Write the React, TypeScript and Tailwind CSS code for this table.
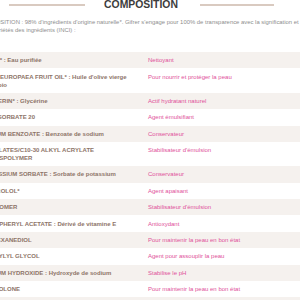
import React from "react";

const rows: [string, string][] = [
  ["AQUA* : Eau purifiée", "Nettoyant"],
  ["OLEA EUROPAEA FRUIT OIL* : Huile d'olive vierge extra bio", "Pour nourrir et protéger la peau"],
  ["GLYCERIN* : Glycérine", "Actif hydratant naturel"],
  ["POLYSORBATE 20", "Agent émulsifiant"],
  ["SODIUM BENZOATE : Benzoate de sodium", "Conservateur"],
  ["ACRYLATES/C10-30 ALKYL ACRYLATE CROSSPOLYMER", "Stabilisateur d'émulsion"],
  ["POTASSIUM SORBATE : Sorbate de potassium", "Conservateur"],
  ["BISABOLOL*", "Agent apaisant"],
  ["CARBOMER", "Stabilisateur d'émulsion"],
  ["TOCOPHERYL ACETATE : Dérivé de vitamine E", "Antioxydant"],
  ["1,2-HEXANEDIOL", "Pour maintenir la peau en bon état"],
  ["CAPRYLYL GLYCOL", "Agent pour assouplir la peau"],
  ["SODIUM HYDROXIDE : Hydroxyde de sodium", "Stabilise le pH"],
  ["TROPOLONE", "Pour maintenir la peau en bon état"],
  ["CITRIC ACID", "Régulateur de pH"],
];

export default function App() {
  return (
    <div className="w-[300px] h-[300px] overflow-hidden bg-white font-['Liberation_Sans',Arial,sans-serif]">
      <div className="flex items-center h-[10px] pl-[9px]">
        <div className="w-[76px] h-[2px] bg-[#d9cac0]" />
        <div className="ml-[19px] w-[74px] text-center text-[10.4px] leading-[10px] font-bold text-[#3c3c3c] whitespace-nowrap">
          COMPOSITION
        </div>
        <div className="ml-[22px] w-[74px] h-[2px] bg-[#d9cac0]" />
      </div>
      <p className="-ml-[22px] mt-[9px] w-[340px] text-[5.9px] leading-[7.5px] text-[#8e8e8e] whitespace-nowrap">
        COMPOSITION : 98% d'ingrédients d'origine naturelle*. Gifrer s'engage pour 100% de transparence avec la signification et
        <br />
        les propriétés des ingrédients (INCI) :
      </p>
      <div className="-ml-[18px] mt-[18px] w-[330px] flex flex-col">
        {rows.map(([a, b], i) => (
          <div
            key={i}
            className={`flex py-[4.2px] text-[6px] leading-[8px] ${i % 2 === 0 ? "bg-[#f5f1ee]" : "bg-white"}`}
          >
            <div className="w-[166px] shrink-0 pr-[18px] font-bold text-[#8d7468]">{a}</div>
            <div className="flex-1 text-[#e0509a]">{b}</div>
          </div>
        ))}
      </div>
    </div>
  );
}
